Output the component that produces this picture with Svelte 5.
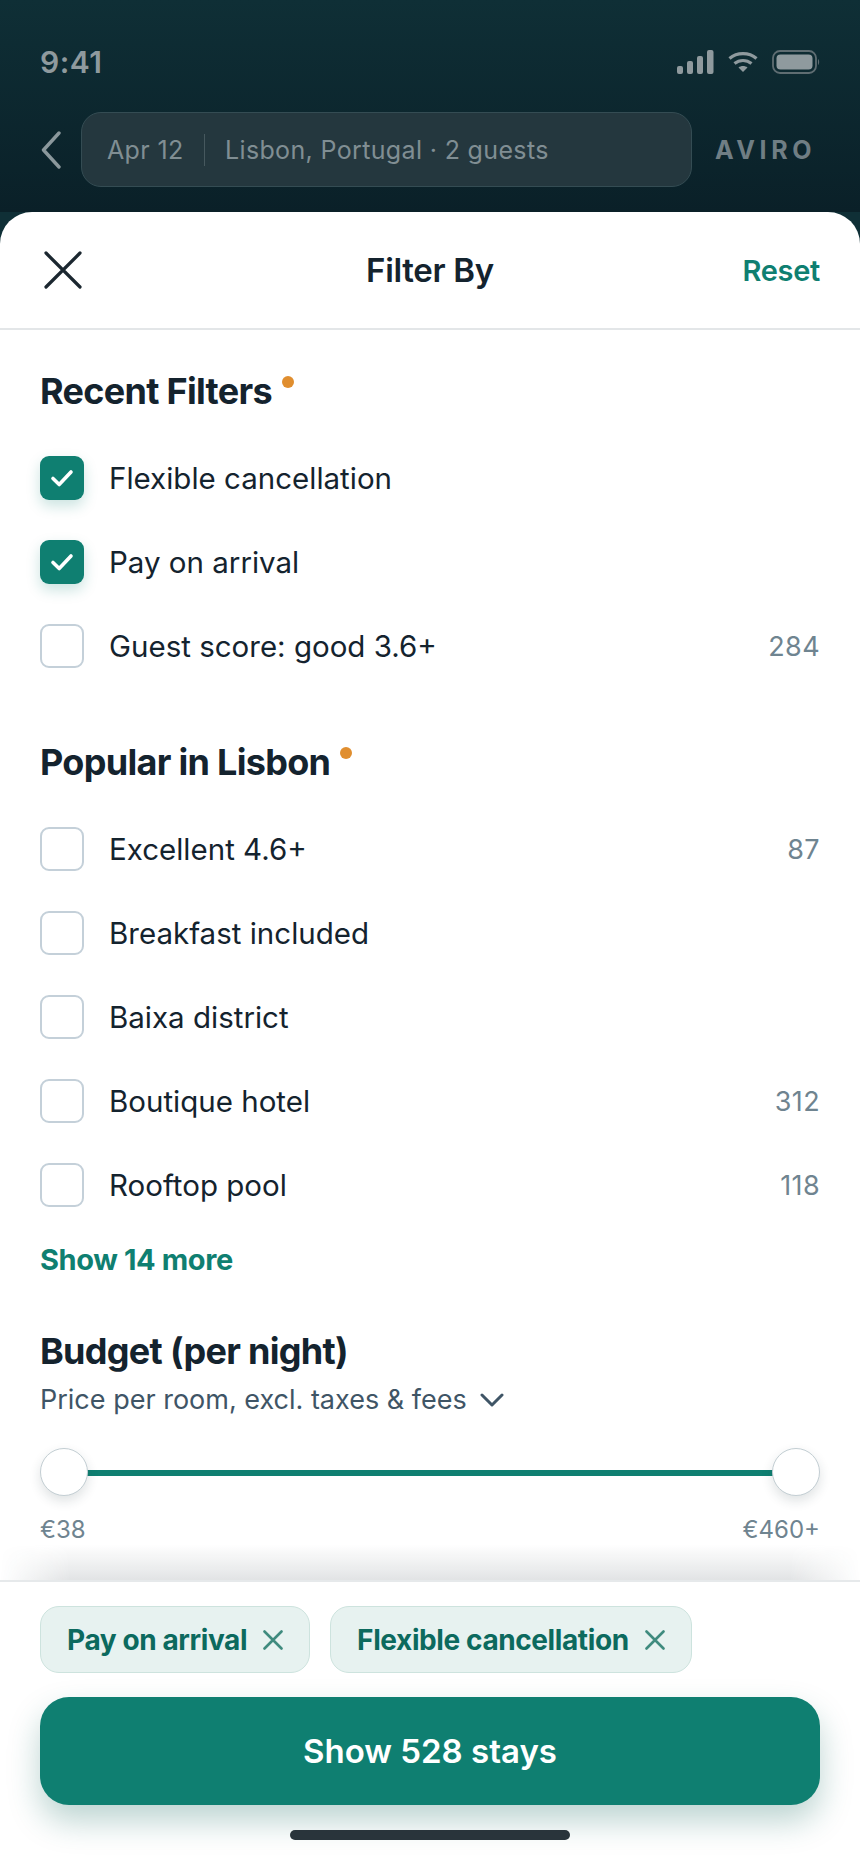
<script>
	const recent = [
		{ label: 'Flexible cancellation', checked: true },
		{ label: 'Pay on arrival', checked: true },
		{ label: 'Guest score: good 3.6+', count: 284 }
	];
	const popular = [
		{ label: 'Excellent 4.6+', count: 87 },
		{ label: 'Breakfast included' },
		{ label: 'Baixa district' },
		{ label: 'Boutique hotel', count: 312 },
		{ label: 'Rooftop pool', count: 118 }
	];
	const chips = ['Pay on arrival', 'Flexible cancellation'];
</script>

{#snippet row(item)}
	<div class="row">
		<span class="box" class:checked={item.checked}>
			{#if item.checked}
				<svg width="26" height="22" viewBox="0 0 26 22" fill="none">
					<path d="M4 11.5 L10.2 17.5 L22 5" stroke="#fff" stroke-width="3.6" stroke-linecap="round" stroke-linejoin="round" />
				</svg>
			{/if}
		</span>
		<span class="label">{item.label}</span>
		{#if item.count}<span class="count">{item.count}</span>{/if}
	</div>
{/snippet}

<div class="screen">
	<header class="top">
		<div class="status">
			<span class="time">9:41</span>
			<div class="status-icons">
				<svg width="37" height="24" viewBox="0 0 37 24" fill="#8f9a9e">
					<rect x="0" y="16" width="6" height="8" rx="2" />
					<rect x="10" y="11" width="6" height="13" rx="2" />
					<rect x="20" y="6" width="6" height="18" rx="2" />
					<rect x="30" y="0" width="6.500" height="24" rx="2" />
				</svg>
				<svg width="30" height="22" viewBox="0 0 30 22" fill="none" stroke="#8f9a9e" stroke-width="3.2">
					<path d="M1.500 7.500 C9 1 21 1 28.500 7.500" />
					<path d="M6.500 12.500 C11.500 8.500 18.500 8.500 23.500 12.500" />
					<path d="M15 21 L10.500 16.500 C13 14.500 17 14.500 19.500 16.500 Z" fill="#8f9a9e" stroke="none" />
				</svg>
				<svg width="48" height="24" viewBox="0 0 48 24" fill="none">
					<rect x="1" y="1" width="43" height="22" rx="7" stroke="#5f6d72" stroke-width="1.800" />
					<rect x="4.500" y="4.500" width="36" height="15" rx="4" fill="#8f9a9e" />
					<path d="M46 9 C47.500 10 47.500 14 46 15 Z" fill="#5f6d72" />
				</svg>
			</div>
		</div>
		<div class="nav">
			<svg class="back" width="20" height="38" viewBox="0 0 20 38" fill="none">
				<path d="M18 2 L2.500 19 L18 36" stroke="#8b989c" stroke-width="3.400" stroke-linecap="round" stroke-linejoin="round" />
			</svg>
			<div class="search">
				<span>Apr 12</span>
				<span class="sep"></span>
				<span>Lisbon, Portugal · 2 guests</span>
			</div>
			<span class="brand">AVIRO</span>
		</div>
	</header>

	<main class="sheet">
		<div class="sheet-head">
			<svg width="38" height="38" viewBox="0 0 38 38" fill="none">
				<path d="M2 2 L36 36 M36 2 L2 36" stroke="#1b2730" stroke-width="3.200" stroke-linecap="round" />
			</svg>
			<h1>Filter By</h1>
			<button class="reset">Reset</button>
		</div>

		<div class="content">
			<section class="group">
				<h2>Recent Filters<i class="dot"></i></h2>
				{#each recent as item}
					{@render row(item)}
				{/each}
			</section>

			<section class="group popular">
				<h2>Popular in Lisbon<i class="dot"></i></h2>
				{#each popular as item}
					{@render row(item)}
				{/each}
				<div class="more">Show 14 more</div>
			</section>

			<section class="budget">
				<h2>Budget (per night)</h2>
				<div class="sub">
					Price per room, excl. taxes &amp; fees
					<svg width="24" height="14" viewBox="0 0 24 14" fill="none">
						<path d="M2 2 L12 12 L22 2" stroke="#3f5566" stroke-width="3" stroke-linecap="round" stroke-linejoin="round" />
					</svg>
				</div>
				<div class="slider">
					<span class="thumb"></span>
					<span class="track"></span>
					<span class="thumb"></span>
				</div>
				<div class="ends"><span>€38</span><span>€460+</span></div>
			</section>
			<div class="fade"></div>
		</div>

		<footer class="foot">
			<div class="chips">
				{#each chips as chip}
					<span class="chip">
						{chip}
						<svg width="20" height="20" viewBox="0 0 20 20" fill="none">
							<path d="M1.500 1.500 L18.500 18.500 M18.500 1.500 L1.500 18.500" stroke="#3f8b7e" stroke-width="2.600" stroke-linecap="round" />
						</svg>
					</span>
				{/each}
			</div>
			<button class="cta">Show 528 stays</button>
			<div class="home"></div>
		</footer>
	</main>
</div>

<style>
	:global(body) {
		margin: 0;
		background: #fff;
	}

	.screen {
		width: 860px;
		height: 1864px;
		display: flex;
		flex-direction: column;
		overflow: hidden;
		font-family: Inter, 'Noto Sans', sans-serif;
		color: #14232e;
		background: #0f2f36;
	}

	.top {
		height: 212px;
		flex: none;
		box-sizing: border-box;
		padding: 0 40px;
		background: linear-gradient(180deg, #0f2f36 0%, #0a2028 100%);
	}

	.status {
		height: 112px;
		display: flex;
		justify-content: space-between;
		align-items: flex-start;
	}

	.time {
		margin-top: 44px;
		font-size: 30px;
		line-height: 36px;
		font-weight: 600;
		color: #8f9a9e;
		letter-spacing: 0.5px;
	}

	.status-icons {
		margin-top: 50px;
		display: flex;
		align-items: center;
		gap: 14px;
	}

	.nav {
		display: flex;
		align-items: center;
		height: 75px;
	}

	.back {
		margin-left: 1px;
		flex: none;
	}

	.search {
		margin-left: 20px;
		width: 611px;
		height: 75px;
		box-sizing: border-box;
		flex: none;
		display: flex;
		align-items: center;
		gap: 20px;
		padding-left: 25px;
		border: 1.500px solid #344c53;
		border-radius: 20px;
		background: #24373e;
		font-size: 25px;
		letter-spacing: 0.35px;
		color: #808e93;
	}

	.sep {
		width: 1.500px;
		height: 32px;
		background: #46585e;
	}

	.brand {
		margin-left: 23px;
		font-size: 25px;
		font-weight: 700;
		letter-spacing: 4.600px;
		color: #707e84;
	}

	.sheet {
		flex: 1;
		min-height: 0;
		display: flex;
		flex-direction: column;
		background: #fff;
		border-radius: 32px 32px 0 0;
	}

	.sheet-head {
		height: 118px;
		flex: none;
		box-sizing: border-box;
		padding: 0 40px 0 44px;
		display: flex;
		align-items: center;
		justify-content: space-between;
		border-bottom: 2px solid #e3e6e8;
		position: relative;
	}

	h1 {
		margin: 0;
		position: absolute;
		left: 0;
		right: 0;
		text-align: center;
		font-size: 33px;
		font-weight: 600;
		letter-spacing: -0.3px;
		color: #14232e;
	}

	.reset {
		padding: 0;
		border: 0;
		background: none;
		font: inherit;
		font-size: 29px;
		font-weight: 600;
		letter-spacing: -0.3px;
		color: #0f7f71;
	}

	.content {
		flex: 1;
		min-height: 0;
		position: relative;
		padding: 0 40px;
		overflow: hidden;
	}

	h2 {
		margin: 0;
		font-size: 36px;
		line-height: 44px;
		font-weight: 700;
		letter-spacing: -0.7px;
		color: #14232e;
	}

	.group {
		padding-top: 39px;
	}

	.group h2 {
		margin-bottom: 23px;
	}

	.group.popular {
		padding-top: 52px;
	}

	.dot {
		display: inline-block;
		width: 12px;
		height: 12px;
		margin-left: 10px;
		border-radius: 50%;
		background: #e08e2f;
		vertical-align: 16px;
	}

	.row {
		height: 84px;
		display: flex;
		align-items: center;
		font-size: 29.500px;
		color: #14232e;
	}

	.box {
		width: 44px;
		height: 44px;
		flex: none;
		box-sizing: border-box;
		border: 2px solid #c4d0d9;
		border-radius: 9px;
		background: #fff;
		display: flex;
		align-items: center;
		justify-content: center;
	}

	.box.checked {
		border: 0;
		background: #0f7f71;
		box-shadow: 0 6px 14px rgba(15, 127, 113, 0.22);
	}

	.label {
		margin-left: 25px;
		flex: 1;
	}

	.count {
		font-size: 27px;
		letter-spacing: 0.4px;
		color: #6f8490;
	}

	.more {
		margin-top: 15px;
		font-size: 29px;
		line-height: 36px;
		font-weight: 700;
		letter-spacing: -0.4px;
		color: #0f7f71;
	}

	.budget {
		padding-top: 51px;
	}

	.sub {
		margin-top: 9px;
		display: flex;
		align-items: center;
		gap: 13px;
		font-size: 27px;
		line-height: 36px;
		color: #3f5566;
	}

	.slider {
		margin-top: 30px;
		display: flex;
		align-items: center;
	}

	.thumb {
		width: 48px;
		height: 48px;
		flex: none;
		box-sizing: border-box;
		border: 1.500px solid #c3ced3;
		border-radius: 50%;
		background: #fff;
		box-shadow: 0 5px 12px rgba(30, 50, 60, 0.14);
		position: relative;
	}

	.track {
		flex: 1;
		height: 6px;
		background: #0f7f71;
		margin: 2px -1px 0;
	}

	.ends {
		margin-top: 19px;
		display: flex;
		justify-content: space-between;
		font-size: 24px;
		line-height: 30px;
		color: #6f8490;
	}

	.fade {
		position: absolute;
		left: 0;
		right: 0;
		bottom: 0;
		height: 36px;
		background: linear-gradient(180deg, rgba(30, 45, 55, 0) 0%, rgba(30, 45, 55, 0.13) 100%);
		mask-image: linear-gradient(90deg, transparent 0, #000 70px, #000 790px, transparent 100%);
	}

	.foot {
		height: 284px;
		flex: none;
		box-sizing: border-box;
		padding: 24px 40px 0;
		border-top: 2px solid #e6e9eb;
		position: relative;
	}

	.chips {
		display: flex;
		gap: 20px;
	}

	.chip {
		height: 67px;
		box-sizing: border-box;
		display: flex;
		align-items: center;
		gap: 16px;
		padding: 0 26px;
		border: 1.500px solid #cde3de;
		border-radius: 19px;
		background: #e7f2f0;
		font-size: 28px;
		font-weight: 700;
		letter-spacing: -0.4px;
		color: #0c6a5e;
	}

	.cta {
		display: block;
		width: 100%;
		height: 108px;
		margin-top: 24px;
		border: 0;
		border-radius: 29px;
		background: #0f7f71;
		box-shadow: 0 16px 32px rgba(15, 100, 90, 0.28);
		font: inherit;
		font-size: 33px;
		font-weight: 600;
		color: #fff;
	}

	.home {
		position: absolute;
		left: 290px;
		bottom: 24px;
		width: 280px;
		height: 10px;
		border-radius: 5px;
		background: #29343b;
	}
</style>
